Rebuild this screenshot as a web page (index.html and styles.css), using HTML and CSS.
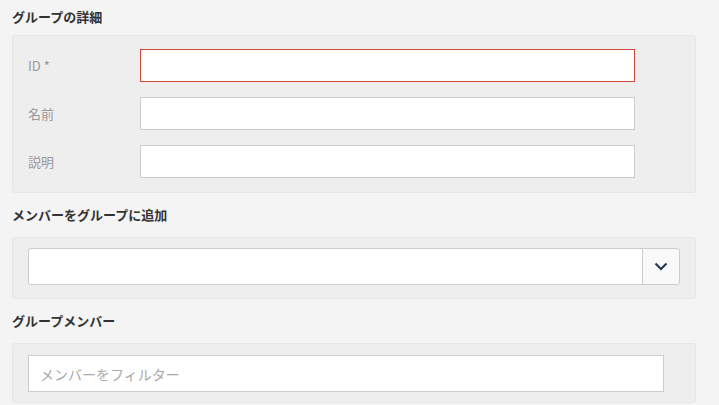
FILE: index.html
```html
<!DOCTYPE html>
<html lang="ja">
<head>
<meta charset="utf-8">
<link rel="stylesheet" href="styles.css">
</head>
<body>
<div class="page">
  <h2 class="heading heading-first">グループの詳細</h2>
  <div class="panel panel-details">
    <div class="row">
      <label class="label">ID *</label>
      <input class="field field-error" type="text">
    </div>
    <div class="row">
      <label class="label">名前</label>
      <input class="field" type="text">
    </div>
    <div class="row">
      <label class="label">説明</label>
      <input class="field" type="text">
    </div>
  </div>

  <h2 class="heading">メンバーをグループに追加</h2>
  <div class="panel panel-add">
    <div class="select">
      <div class="select-value"></div>
      <div class="select-button">
        <svg width="14" height="9" viewBox="0 0 14 9"><polyline points="1.5,1.5 7,7 12.5,1.5" fill="none" stroke="#1f3550" stroke-width="2"/></svg>
      </div>
    </div>
  </div>

  <h2 class="heading">グループメンバー</h2>
  <div class="panel panel-members">
    <input class="filter" type="text" placeholder="メンバーをフィルター">
  </div>
</div>
</body>
</html>
```
FILE: styles.css
```css
html, body {
  margin: 0;
  padding: 0;
  background: #f4f4f4;
  font-family: "Noto Sans CJK JP", "Noto Sans", sans-serif;
  color: #333;
}
.page {
  padding: 0 23px 0 12px;
}
.heading {
  margin: 0;
  padding: 12px 0;
  font-size: 13px;
  line-height: 20px;
  font-weight: bold;
  color: #333;
}
.heading-first {
  padding: 7px 0 8px;
}
.panel {
  background: #eeeeee;
  border: 1px solid #e6e6e6;
  border-radius: 3px;
}
.panel-details {
  padding: 13px 15px 14px;
  display: flex;
  flex-direction: column;
  gap: 15px;
}
.row {
  display: flex;
  align-items: center;
}
.label {
  width: 112px;
  font-size: 13px;
  color: #999;
}
.field {
  box-sizing: border-box;
  width: 495px;
  height: 33px;
  margin: 0;
  border: 1px solid #cccccc;
  background: #fff;
  outline: none;
  padding: 0 8px;
}
.field-error {
  border-color: #d2473a;
}
.panel-add {
  padding: 10px 15px 13px;
}
.select {
  display: flex;
  height: 37px;
  box-sizing: border-box;
  border: 1px solid #cccccc;
  border-radius: 3px;
  background: #fff;
}
.select-value {
  flex: 1;
}
.select-button {
  width: 36px;
  border-left: 1px solid #cccccc;
  background: #f9f9f9;
  border-radius: 0 3px 3px 0;
  display: flex;
  align-items: center;
  justify-content: center;
}
.panel-members {
  padding: 11px 15px 10px;
}
.filter {
  display: block;
  box-sizing: border-box;
  width: 636px;
  height: 37px;
  margin: 0;
  border: 1px solid #cccccc;
  background: #fff;
  padding: 0 11px;
  font-family: "Noto Sans CJK JP", sans-serif;
  font-size: 14px;
  outline: none;
}
.filter::placeholder {
  color: #aaaaaa;
}
```
